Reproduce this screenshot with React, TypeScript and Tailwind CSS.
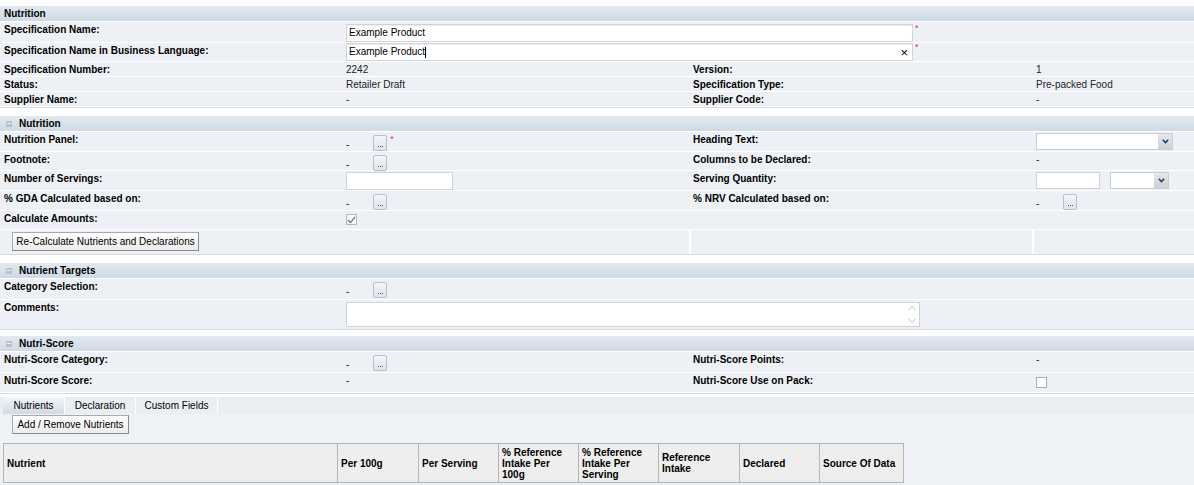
import React from 'react'

const FONT = { fontFamily: '"Liberation Sans", Arial, sans-serif' }

function Header({ title, collapsible = false }: { title: string; collapsible?: boolean }) {
  return (
    <div className="h-[16px] flex items-center gap-[7px] pl-[4px] bg-gradient-to-b from-[#e2e9f0] to-[#cfdae5] border-b border-white">
      {collapsible && (
        <span className="w-[6px] h-[6px] ml-[2px] bg-[#b9c2cc] flex items-center justify-center">
          <span className="w-[4px] h-px bg-[#eef1f4]" />
        </span>
      )}
      <span className="font-bold text-[10px] text-black">{title}</span>
    </div>
  )
}

function Row({ h, children }: { h: string; children: React.ReactNode }) {
  return (
    <div className={`grid grid-cols-[342px_347px_343px_1fr] bg-[#edf1f5] border-b border-white ${h}`}>
      {children}
    </div>
  )
}

function Label({ text }: { text?: string }) {
  return <div className="pl-[4px] pt-[2px] font-bold text-[10px] text-black leading-[12px]">{text}</div>
}

function Value({ children }: { children?: React.ReactNode }) {
  return <div className="pl-[4px] pt-[2px] text-[10px] text-[#222] leading-[12px]">{children}</div>
}

function Dots() {
  return (
    <span className="w-[14px] h-[16px] border border-[#b6c0cb] rounded-[2px] bg-gradient-to-b from-[#f4f6f9] to-[#dde4eb] flex items-end justify-center pb-[3px]">
      <span className="flex gap-px">
        <span className="w-px h-px bg-[#4d5a6a]" />
        <span className="w-px h-px bg-[#4d5a6a]" />
        <span className="w-px h-px bg-[#4d5a6a]" />
      </span>
    </span>
  )
}

function DashDots({ star = false }: { star?: boolean }) {
  return (
    <div className="pl-[4px] pt-[3px] flex items-start text-[10px] text-[#222] leading-[12px]">
      <span className="pt-[4px]">-</span>
      <span className="ml-[24px]"><Dots /></span>
      {star && <span className="ml-[3px] text-[#e0303a] text-[9px] leading-[9px]">*</span>}
    </div>
  )
}

function Chevron() {
  return (
    <svg width="7" height="5" viewBox="0 0 7 5">
      <path d="M0.8 0.8 L3.5 3.6 L6.2 0.8" fill="none" stroke="#1f3f7a" strokeWidth="1.6" />
    </svg>
  )
}

function Select({ w }: { w: string }) {
  return (
    <div className={`h-[17px] border border-[#c9ced4] bg-white flex justify-end ${w}`}>
      <span className="w-[14px] h-full bg-gradient-to-b from-[#e8e8e8] to-[#d0d0d0] flex items-center justify-center">
        <Chevron />
      </span>
    </div>
  )
}

function Btn({ text, w }: { text: string; w: string }) {
  return (
    <button className={`block h-[19px] ${w} border border-[#a9a9a9] border-b-[#8a8a8a] border-r-[#8a8a8a] bg-gradient-to-b from-white to-[#ebebeb] text-[10px] leading-[17px] text-black`}>
      {text}
    </button>
  )
}

const cols = [
  { t: 'Nutrient', w: 'w-[333px]' },
  { t: 'Per 100g', w: 'w-[81px]' },
  { t: 'Per Serving', w: 'w-[80px]' },
  { t: '% Reference Intake Per 100g', w: 'w-[80px]' },
  { t: '% Reference Intake Per Serving', w: 'w-[80px]' },
  { t: 'Reference Intake', w: 'w-[81px]' },
  { t: 'Declared', w: 'w-[80px]' },
  { t: 'Source Of Data', w: 'w-[84px]' },
]

export default function App() {
  return (
    <div className="w-[1194px] h-[485px] bg-white pt-[6px] overflow-hidden" style={FONT}>
      {/* Spec */}
      <div className="border-b border-[#d8dde3]">
        <Header title="Nutrition" />
        <Row h="h-[21px]">
          <Label text="Specification Name:" />
          <div className="col-span-2 pl-[4px] pt-[2px] flex items-start">
            <div className="w-[567px] h-[18px] border border-[#cfd4d9] bg-white shadow-[inset_0_1px_1px_rgba(0,0,0,0.08)] pl-[2px] text-[10px] leading-[16px] text-black">Example Product</div>
            <span className="ml-[2px] text-[#e0303a] text-[9px] leading-[9px]">*</span>
          </div>
          <div />
        </Row>
        <Row h="h-[19px]">
          <Label text="Specification Name in Business Language:" />
          <div className="col-span-2 pl-[4px] flex items-start">
            <div className="w-[567px] h-[18px] border border-[#cfd4d9] bg-white shadow-[inset_0_1px_1px_rgba(0,0,0,0.08)] pl-[2px] pr-[4px] text-[10px] leading-[16px] text-black flex items-center justify-between">
              <span>Example Product<span className="inline-block w-px h-[11px] bg-black align-middle" /></span>
              <span className="text-[13px] leading-[13px]">×</span>
            </div>
            <span className="ml-[2px] text-[#e0303a] text-[9px] leading-[9px]">*</span>
          </div>
          <div />
        </Row>
        <Row h="h-[15px]">
          <Label text="Specification Number:" />
          <Value>2242</Value>
          <Label text="Version:" />
          <Value>1</Value>
        </Row>
        <Row h="h-[15px]">
          <Label text="Status:" />
          <Value>Retailer Draft</Value>
          <Label text="Specification Type:" />
          <Value>Pre-packed Food</Value>
        </Row>
        <Row h="h-[15px]">
          <Label text="Supplier Name:" />
          <Value>-</Value>
          <Label text="Supplier Code:" />
          <Value>-</Value>
        </Row>
      </div>

      {/* Nutrition */}
      <div className="mt-[8px] border-b border-[#d8dde3]">
        <Header title="Nutrition" collapsible />
        <Row h="h-[20px]">
          <Label text="Nutrition Panel:" />
          <DashDots star />
          <Label text="Heading Text:" />
          <div className="pl-[4px] pt-[1px]"><Select w="w-[137px]" /></div>
        </Row>
        <Row h="h-[19px]">
          <Label text="Footnote:" />
          <DashDots />
          <Label text="Columns to be Declared:" />
          <Value>-</Value>
        </Row>
        <Row h="h-[20px]">
          <Label text="Number of Servings:" />
          <div className="pl-[4px] pt-[1px]">
            <div className="w-[107px] h-[18px] border border-[#cfd4d9] bg-white" />
          </div>
          <Label text="Serving Quantity:" />
          <div className="pl-[4px] pt-[1px] flex gap-[10px]">
            <div className="w-[64px] h-[17px] border border-[#cfd4d9] bg-white" />
            <Select w="w-[59px]" />
          </div>
        </Row>
        <Row h="h-[20px]">
          <Label text="% GDA Calculated based on:" />
          <DashDots />
          <Label text="% NRV Calculated based on:" />
          <DashDots />
        </Row>
        <Row h="h-[19px]">
          <Label text="Calculate Amounts:" />
          <div className="pl-[4px] pt-[3px]">
            <span className="w-[11px] h-[11px] border border-[#b4b9bf] bg-[#f6f7f8] flex items-center justify-center">
              <svg width="9" height="8" viewBox="0 0 9 8">
                <path d="M1 4 L3.5 6.5 L8 0.8" fill="none" stroke="#6b7078" strokeWidth="1.2" />
              </svg>
            </span>
          </div>
          <Label />
          <div />
        </Row>
        <div className="grid grid-cols-[689px_343px_1fr] h-[24px] bg-[#edf1f5]">
          <div className="pl-[12px] pt-[2px]"><Btn text="Re-Calculate Nutrients and Declarations" w="w-[187px]" /></div>
          <div className="border-l-2 border-white" />
          <div className="border-l-2 border-white" />
        </div>
      </div>

      {/* Nutrient Targets */}
      <div className="mt-[8px] border-b border-[#d8dde3]">
        <Header title="Nutrient Targets" collapsible />
        <Row h="h-[21px]">
          <Label text="Category Selection:" />
          <DashDots />
          <div />
          <div />
        </Row>
        <div className="grid grid-cols-[342px_1fr] h-[29px] bg-[#edf1f5]">
          <Label text="Comments:" />
          <div className="pl-[4px] pt-[2px]">
            <div className="w-[574px] h-[25px] border border-[#cfd4d9] bg-white flex justify-end pr-[1px]">
              <svg width="12" height="23" viewBox="0 0 12 23">
                <path d="M2.5 7 L6 3.5 L9.5 7" fill="none" stroke="#b4bac2" strokeWidth="1" />
                <path d="M2.5 16 L6 19.5 L9.5 16" fill="none" stroke="#b4bac2" strokeWidth="1" />
              </svg>
            </div>
          </div>
        </div>
      </div>

      {/* Nutri-Score */}
      <div className="mt-[6px] border-b border-[#d8dde3]">
        <Header title="Nutri-Score" collapsible />
        <Row h="h-[21px]">
          <Label text="Nutri-Score Category:" />
          <DashDots />
          <Label text="Nutri-Score Points:" />
          <Value>-</Value>
        </Row>
        <Row h="h-[20px]">
          <Label text="Nutri-Score Score:" />
          <Value>-</Value>
          <Label text="Nutri-Score Use on Pack:" />
          <div className="pl-[4px] pt-[4px]">
            <span className="block w-[11px] h-[11px] border border-[#a9aeb4] bg-white" />
          </div>
        </Row>
      </div>

      {/* Tabs */}
      <div className="mt-[3px] bg-[#eef2f6] h-[200px]">
        <div className="flex h-[17px] pl-[3px] bg-[#e9eef3]">
          <div className="w-[62px] h-full bg-gradient-to-b from-[#f3f6f9] to-[#cfdae6] border-r border-white text-[10px] leading-[17px] text-black text-center">Nutrients</div>
          <div className="w-[71px] h-full border-r border-white text-[10px] leading-[17px] text-black text-center">Declaration</div>
          <div className="w-[82px] h-full border-r border-white text-[10px] leading-[17px] text-black text-center">Custom Fields</div>
        </div>
        <div className="flex pl-[12px] pt-[1px]">
          <Btn text="Add / Remove Nutrients" w="w-[117px]" />
        </div>
        <div className="mt-[9px] ml-[3px] flex w-max border border-[#b5b5b5] bg-[#eeeeee]">
          {cols.map((c, i) => (
            <div key={c.t} className={`${c.w} h-[38px] px-[3px] flex items-center font-bold text-[10px] leading-[11px] text-black ${i > 0 ? 'border-l border-[#b5b5b5]' : ''}`}>
              {c.t}
            </div>
          ))}
        </div>
      </div>
    </div>
  )
}
